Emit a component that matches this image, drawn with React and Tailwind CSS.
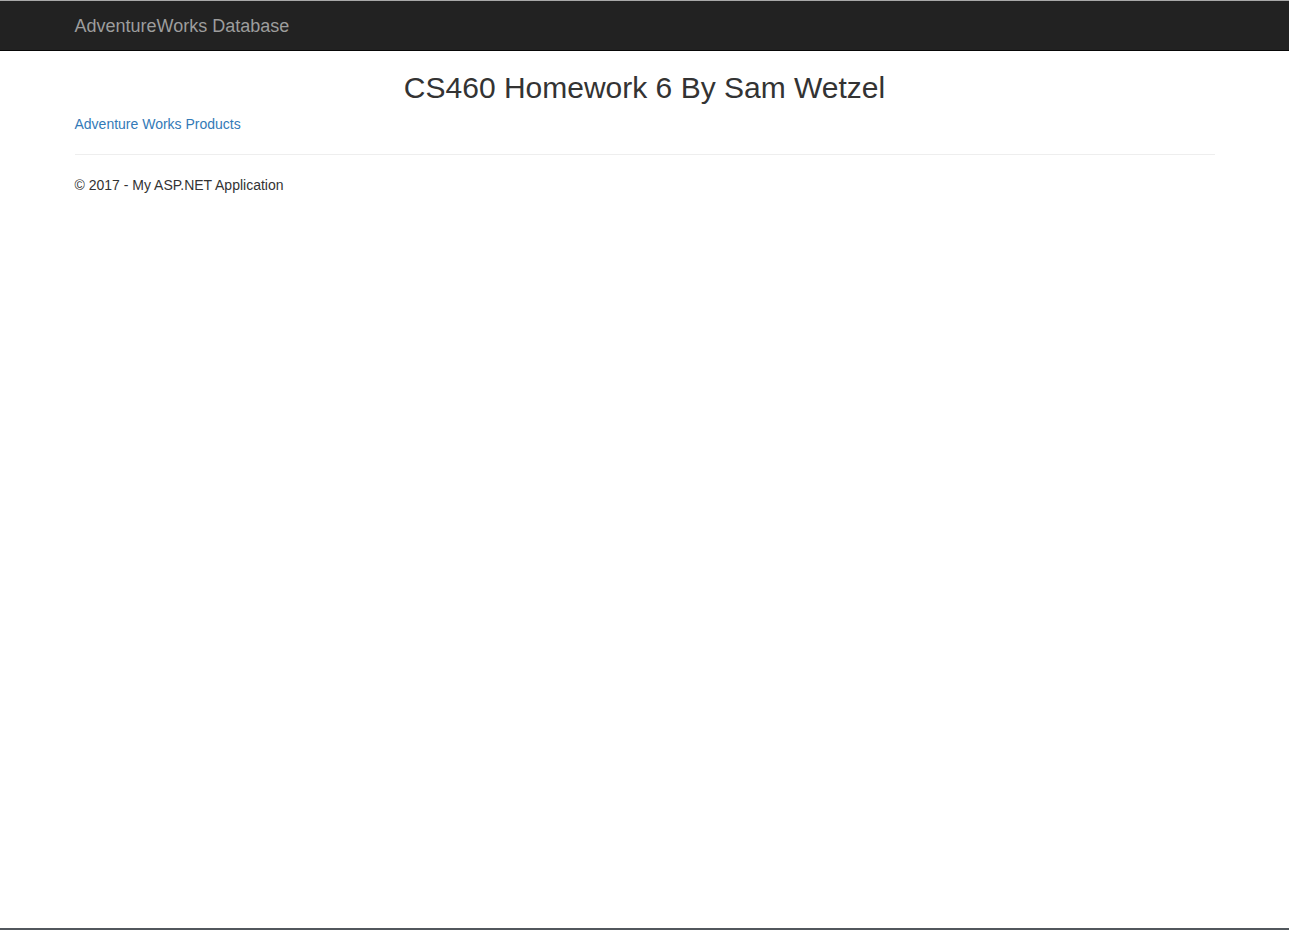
export default function App() {
  return (
    <div className="h-[930px] flex flex-col bg-white text-[#333] text-[14px] leading-[20px]" style={{ fontFamily: "'Liberation Sans', Arial, sans-serif" }}>
      {/* window edge */}
      <div className="h-px bg-[#a9a9a9]" />

      {/* Navbar */}
      <nav className="h-[50px] bg-[#222] border-b border-[#080808]">
        <div className="w-[1170px] mx-auto px-[15px]">
          <a className="block py-[15px] text-[18px] leading-[20px] text-[#9d9d9d]" href="#">
            AdventureWorks Database
          </a>
        </div>
      </nav>

      {/* Body */}
      <div className="flex-1">
        <div className="w-[1170px] mx-auto px-[15px]">
          <h2 className="mt-[20px] mb-[10px] text-center text-[30px] leading-[1.1] font-normal">
            CS460 Homework 6 By Sam Wetzel
          </h2>
          <a className="text-[#337ab7]" href="#">Adventure Works Products</a>
          <hr className="mt-[20px] mb-[20px] border-0 border-t border-[#eee]" />
          <footer>
            <p>© 2017 - My ASP.NET Application</p>
          </footer>
        </div>
      </div>

      <div className="h-[2px] bg-[#52575d]" />
    </div>
  );
}
